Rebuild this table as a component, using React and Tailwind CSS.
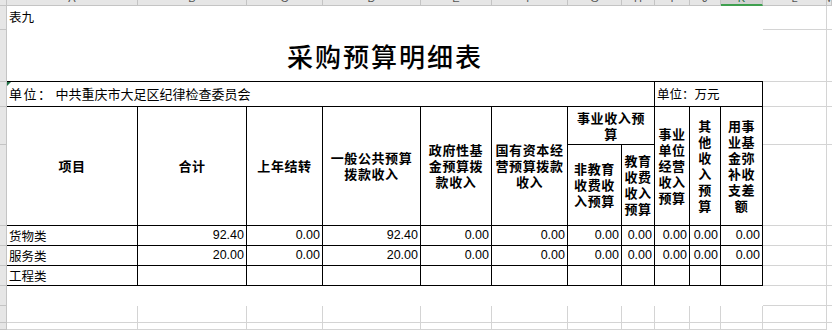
import React from "react";

const COL = ["", "col-start-1", "col-start-2", "col-start-3", "col-start-4", "col-start-5", "col-start-6", "col-start-7", "col-start-8", "col-start-9", "col-start-10", "col-start-11", "col-start-12", "col-start-13", "col-start-14"];
const ROW = ["", "row-start-1", "row-start-2", "row-start-3", "row-start-4", "row-start-5", "row-start-6", "row-start-7", "row-start-8", "row-start-9", "row-start-10", "row-start-11", "row-start-12"];

const LETTERS = ["A", "B", "C", "D", "E", "F", "G", "H", "I", "J", "K", "L", "M"];

const DATA = [
  { label: "货物类", vals: ["92.40", "0.00", "92.40", "0.00", "0.00", "0.00", "0.00", "0.00", "0.00", "0.00"] },
  { label: "服务类", vals: ["20.00", "0.00", "20.00", "0.00", "0.00", "0.00", "0.00", "0.00", "0.00", "0.00"] },
  { label: "工程类", vals: ["", "", "", "", "", "", "", "", "", ""] },
];

const HB = "border-r border-b border-black flex items-center justify-center text-center font-bold text-[13px] leading-[16px] tracking-[0.6px] whitespace-nowrap";
const GR = "border-r border-b border-[#d4d4d4]";
const GB = "border-b border-[#d4d4d4]";

export default function App() {
  return (
    <div className="w-[832px] h-[330px] overflow-hidden bg-white text-black font-['Noto_Sans_CJK_SC',sans-serif] grid grid-cols-[7px_131px_109px_76px_98px_71px_76px_54px_33px_35px_31px_42px_64px_1fr] grid-rows-[6px_24px_52px_25px_38px_81px_20px_20px_20px_20px_17px_1fr]">
      {/* corner */}
      <div className="col-start-1 row-start-1 bg-[#e6e6e6] border-r border-b border-[#c4c4c4]" />
      {/* column headers */}
      {LETTERS.map((l, i) => (
        <div
          key={l}
          className={`${COL[i + 2]} row-start-1 overflow-hidden flex justify-center items-end font-['Liberation_Sans',sans-serif] ${
            l === "K"
              ? "bg-[#d2d2d2] border-r border-[#c4c4c4] border-b-2 border-b-[#3f9f4f] text-[#217346]"
              : "bg-[#e6e6e6] border-r border-b border-[#c4c4c4] text-[#555]"
          }`}
        >
          <span className={`text-[11px] leading-[11px] ${l === "K" ? "mb-0" : "mb-[1px]"}`}>{l}</span>
        </div>
      ))}
      {/* row headers */}
      {[2, 3, 4, 5, 6, 7, 8, 9, 10, 11, 12].map((r) => (
        <div key={r} className={`col-start-1 ${ROW[r]} bg-[#e6e6e6] border-r border-b border-[#c4c4c4]`} />
      ))}

      {/* row 1: 表九 */}
      <div className="col-start-2 col-span-11 row-start-2 pl-[2px] pt-[4px] text-[12.5px] leading-[14px]">表九</div>
      <div className={`col-start-13 row-start-2 ${GR}`} />
      <div className={`col-start-14 row-start-2 ${GB}`} />

      {/* row 2: title */}
      <div className="col-start-2 col-span-11 row-start-3 border-b border-black flex items-center justify-center pt-[1px]">
        <span className="text-[26px] leading-[30px] tracking-[2px] font-medium">采购预算明细表</span>
      </div>
      <div className={`col-start-13 row-start-3 ${GR}`} />
      <div className={`col-start-14 row-start-3 ${GB}`} />

      {/* row 3: 单位 */}
      <div className="col-start-2 col-span-8 row-start-4 border-r border-b border-black relative flex items-center pl-[2px] text-[13px] leading-[16px] whitespace-nowrap">
        <div className="absolute left-0 top-0 w-0 h-0 border-t-[4px] border-r-[4px] border-t-[#217346] border-r-transparent" />
        <span className="tracking-[1.5px]">单位：</span>
        <span className="ml-[3px]">中共重庆市大足区纪律检查委员会</span>
      </div>
      <div className="col-start-10 col-span-3 row-start-4 border-r border-b border-black flex items-center pl-[2px] text-[12.5px] leading-[16px] whitespace-nowrap">
        单位：万元
      </div>
      <div className={`col-start-13 row-start-4 ${GR}`} />
      <div className={`col-start-14 row-start-4 ${GB}`} />

      {/* header rows */}
      <div className={`col-start-2 row-start-5 row-span-2 ${HB}`}>项目</div>
      <div className={`col-start-3 row-start-5 row-span-2 ${HB}`}>合计</div>
      <div className={`col-start-4 row-start-5 row-span-2 ${HB}`}>上年结转</div>
      <div className={`col-start-5 row-start-5 row-span-2 ${HB}`}>
        <span>一般公共预算<br />拨款收入</span>
      </div>
      <div className={`col-start-6 row-start-5 row-span-2 ${HB}`}>
        <span>政府性基<br />金预算拨<br />款收入</span>
      </div>
      <div className={`col-start-7 row-start-5 row-span-2 ${HB}`}>
        <span>国有资本经<br />营预算拨款<br />收入</span>
      </div>
      <div className={`col-start-8 col-span-2 row-start-5 ${HB}`}>
        <span>事业收入预<br />算</span>
      </div>
      <div className={`col-start-8 row-start-6 ${HB}`}>
        <span>非教育<br />收费收<br />入预算</span>
      </div>
      <div className={`col-start-9 row-start-6 ${HB}`}>
        <span>教育<br />收费<br />收入<br />预算</span>
      </div>
      <div className={`col-start-10 row-start-5 row-span-2 ${HB}`}>
        <span>事业<br />单位<br />经营<br />收入<br />预算</span>
      </div>
      <div className={`col-start-11 row-start-5 row-span-2 ${HB}`}>
        <span>其<br />他<br />收<br />入<br />预<br />算</span>
      </div>
      <div className={`col-start-12 row-start-5 row-span-2 ${HB}`}>
        <span>用事<br />业基<br />金弥<br />补收<br />支差<br />额</span>
      </div>
      <div className={`col-start-13 row-start-5 ${GR}`} />
      <div className={`col-start-14 row-start-5 ${GB}`} />
      <div className={`col-start-13 row-start-6 ${GR}`} />
      <div className={`col-start-14 row-start-6 ${GB}`} />

      {/* data rows */}
      {DATA.map((d, ri) => (
        <React.Fragment key={d.label}>
          <div className={`col-start-2 ${ROW[ri + 7]} border-r border-b border-black flex items-center pl-[2px] text-[12.5px] leading-[16px]`}>
            {d.label}
          </div>
          {d.vals.map((v, ci) => (
            <div
              key={ci}
              className={`${COL[ci + 3]} ${ROW[ri + 7]} border-r border-b border-black flex items-center justify-end pr-[2px] pb-[2px] font-['Liberation_Sans',sans-serif] text-[12.5px] leading-[16px]`}
            >
              {v}
            </div>
          ))}
          <div className={`col-start-13 ${ROW[ri + 7]} ${GR}`} />
          <div className={`col-start-14 ${ROW[ri + 7]} ${GB}`} />
        </React.Fragment>
      ))}

      {/* row 9: blank white band */}
      <div className="col-start-2 col-span-11 row-start-10" />
      <div className={`col-start-13 row-start-10 ${GR}`} />
      <div className={`col-start-14 row-start-10 ${GB}`} />

      {/* rows 10 & 11: plain grid */}
      {[2, 3, 4, 5, 6, 7, 8, 9, 10, 11, 12, 13].map((c) => (
        <div key={`a${c}`} className={`${COL[c]} row-start-11 ${GR}`} />
      ))}
      <div className={`col-start-14 row-start-11 ${GB}`} />
      {[2, 3, 4, 5, 6, 7, 8, 9, 10, 11, 12, 13].map((c) => (
        <div key={`b${c}`} className={`${COL[c]} row-start-12 ${GR}`} />
      ))}
    </div>
  );
}
